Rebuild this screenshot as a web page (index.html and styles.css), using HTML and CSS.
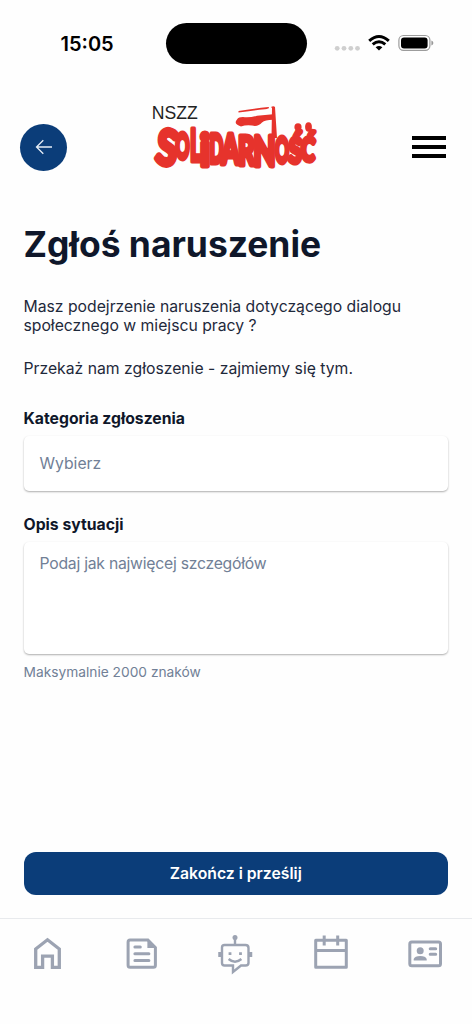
FILE: index.html
```html
<!DOCTYPE html>
<html lang="pl">
<head>
<meta charset="utf-8">
<title>Zgłoś naruszenie</title>
<link rel="stylesheet" href="styles.css">
</head>
<body>
<div class="screen">
  <div class="status">
    <span class="time">15:05</span>
    <span class="island"></span>
    <svg class="indicators" width="100" height="24" viewBox="0 0 100 24">
      <g fill="#cfcfcf"><circle cx="3.200" cy="17.300" r="2.400"/><circle cx="10" cy="17.300" r="2.400"/><circle cx="16.800" cy="17.300" r="2.400"/><circle cx="23.500" cy="17.300" r="2.400"/></g>
      <g fill="none" stroke="#000" stroke-width="3">
        <path d="M35.200 9.800Q45 1.300 54.800 9.800"/>
        <path d="M38.700 13.400Q45 8.100 51.300 13.400"/>
      </g>
      <path d="M41.600 16.300Q45 13.500 48.400 16.300L45 19.600Z"/>
      <rect x="64.900" y="4.500" width="31" height="14.900" rx="4.600" fill="#fff" stroke="#9c9c9c" stroke-width="1.200"/>
      <rect x="67" y="6.500" width="26.600" height="10.900" rx="3"/>
      <path d="M97.400 9.600q2 .7 2 2.400t-2 2.400z" fill="#999"/>
    </svg>
  </div>
  <header class="header">
    <button class="back" aria-label="Wstecz">
      <svg width="18" height="16" viewBox="0 0 18 16" fill="none" stroke="#e6edf6" stroke-width="1.300"><path d="M17 8H1.500M8.300 1.200 1.500 8l6.800 6.800"/></svg>
    </button>
    <svg class="logo" width="170" height="76" viewBox="150 98 170 76">
      <text class="union" x="151.700" y="118.600" textLength="46" lengthAdjust="spacingAndGlyphs">NSZZ</text>
      <text class="brand"><tspan x="154.500" y="162.500" font-size="49" textLength="21" lengthAdjust="spacingAndGlyphs" rotate="10">S</tspan><tspan x="175.500" y="158.500" font-size="36" textLength="14" lengthAdjust="spacingAndGlyphs">O</tspan><tspan x="190" y="161" font-size="43" textLength="11" lengthAdjust="spacingAndGlyphs">L</tspan><tspan x="200" y="166" font-size="43" textLength="10" lengthAdjust="spacingAndGlyphs">i</tspan><tspan x="209.500" y="163" font-size="40" textLength="14" lengthAdjust="spacingAndGlyphs">D</tspan><tspan x="221.500" y="164" font-size="41" textLength="18" lengthAdjust="spacingAndGlyphs">A</tspan><tspan x="238" y="165" font-size="40" textLength="17" lengthAdjust="spacingAndGlyphs">R</tspan><tspan x="253.500" y="166" font-size="41" textLength="22" lengthAdjust="spacingAndGlyphs">N</tspan><tspan x="275" y="163" font-size="36" textLength="14" lengthAdjust="spacingAndGlyphs">O</tspan><tspan x="288.500" y="162.500" font-size="34" textLength="13" lengthAdjust="spacingAndGlyphs" rotate="2">Ś</tspan><tspan x="300.500" y="160" font-size="32" textLength="14" lengthAdjust="spacingAndGlyphs" rotate="4">Ć</tspan></text>
      <g fill="#e6332c">
        <path d="M238.500 111Q252 108.800 268.500 107Q270.500 108.500 265 109.200Q250 110.700 238.500 112.600Z"/>
        <path d="M271 107Q273.500 105.300 275 107L277 138H271.500L272 108Z"/>
        <path d="M237 119.500Q239 116.500 245 117.200Q251 117.500 257 115.800L273 114.300V119.800Q265 120 262 122.500Q258 127 252 125.500Q246 124.700 241 126.500Q233 124 237 119.500Z"/>
        <ellipse cx="298" cy="127" rx="3.600" ry="3.800"/><ellipse cx="308.500" cy="127" rx="3.400" ry="4.700"/>
      </g>
    </svg>
    <button class="menu" aria-label="Menu"><i></i><i></i><i></i></button>
  </header>
  <main class="content">
    <h1>Zgłoś naruszenie</h1>
    <p class="lead">Masz podejrzenie naruszenia dotyczącego dialogu<br>społecznego w miejscu pracy ?</p>
    <p class="note">Przekaż nam zgłoszenie - zajmiemy się tym.</p>
    <div class="label">Kategoria zgłoszenia</div>
    <div class="field select">Wybierz</div>
    <div class="label second">Opis sytuacji</div>
    <div class="field area">Podaj jak najwięcej szczegółów</div>
    <div class="hint">Maksymalnie 2000 znaków</div>
    <button class="submit">Zakończ i prześlij</button>
  </main>
  <nav class="tabs">
    <svg width="40" height="44" viewBox="0 0 40 44" fill="none" stroke="#9ca3b2" stroke-width="3.300"><path d="M8.700 35.300V17L20.500 7.800 32.300 17v18.300h-6.900V24.100h-9.800v11.200z"/></svg>
    <svg width="40" height="44" viewBox="0 0 40 44" fill="none" stroke="#9ca3b2" stroke-width="3"><path d="M8.100 8h17.800L33.400 15.500v17.800q0 2-2 2H8.100q-2 0-2-2V10q0-2 2-2z"/><path d="M25.400 7.500V16h8.500z" fill="#9ca3b2" stroke="none"/><path stroke-linecap="round" d="M12.900 15h5.400M12.900 21.800h14M12.900 28.500h14"/></svg>
    <svg width="40" height="44" viewBox="0 0 40 44" fill="none" stroke="#9ca3b2" stroke-width="2.400"><g transform="translate(-1)"><circle cx="20" cy="5.500" r="2.500" fill="#9ca3b2" stroke="none"/><path d="M20 6v7M9.500 13h21q3 0 3 3v15q0 2.500-3 2.500H26L18 40v-6.500H9.500q-2.500 0-2.500-2.500V15.500Q7 13 9.500 13zM13.600 27q6.400 5.400 12.800 0"/><path d="M5 20v5M35.500 20v5" stroke-width="3.500"/><path d="M15 20.200v2.800M25.500 20.200v2.800" stroke-width="2.800"/></g></svg>
    <svg width="40" height="44" viewBox="0 0 40 44" fill="none" stroke="#9ca3b2" stroke-width="3"><path d="M4.700 8.300h30.600v27H4.700zM4.700 18.500h30.600M13.200 3.500v10M26.700 3.500v10" stroke-linejoin="round"/></svg>
    <svg width="40" height="44" viewBox="0 0 40 44" fill="none" stroke="#9ca3b2" stroke-width="3"><rect x="4.800" y="9.900" width="30.700" height="23.800" rx="2"/><circle cx="15.200" cy="18.700" r="3.500" fill="#9ca3b2" stroke="none"/><path d="M8.700 28.500v-1.500Q9.700 24 15.200 24t6.500 3v1.500z" fill="#9ca3b2" stroke="none"/><path stroke-linecap="round" d="M25.200 16.800h5.500M25.200 22.200h5.500"/></svg>
  </nav>
</div>
</body>
</html>
```
FILE: styles.css
```css
* { box-sizing: border-box; }
body { margin: 0; background: #fff; color: #0f172a; font-family: Inter, sans-serif; }
button { border: 0; padding: 0; font: inherit; }
svg { display: block; }
.screen { width: 472px; height: 1024px; display: flex; flex-direction: column; background: #fefefe; overflow: hidden; }
.status { height: 86px; display: flex; align-items: center; padding: 0 38px 0 60.5px; }
.time { width: 105px; padding-top: 1px; font-size: 20px; font-weight: 600; line-height: 24px; color: #000; }
.island { width: 141px; height: 41px; border-radius: 21px; background: #000; }
.indicators { margin-left: 27.500px; flex: none; }
.header { height: 122px; display: flex; align-items: center; padding: 0 26px 0 20px; }
.back { width: 47px; height: 47px; border-radius: 50%; background: #0b3d79; display: flex; align-items: center; justify-content: center; }
.logo { margin-left: 83px; margin-top: -22px; overflow: visible; }
.union { font-family: "Liberation Sans", sans-serif; font-size: 18px; fill: #222; }
.brand { font-family: Lato, sans-serif; font-weight: 900; fill: #e6332c; stroke: #e6332c; stroke-width: 5px; stroke-linejoin: round; }
.menu { width: 34px; margin-left: auto; display: flex; flex-direction: column; gap: 5.300px; background: none; }
.menu i { height: 4px; background: #000; }
.content { flex: 1; padding: 14px 24px 0 23.500px; display: flex; flex-direction: column; }
h1 { margin: 0; font-size: 35.400px; line-height: 46px; font-weight: 700; }
p { margin: 0; font-size: 15.740px; line-height: 19px; color: #1e293b; }
.lead { margin-top: 29px; }
.note { margin-top: 24px; }
.label { margin-top: 31px; font-size: 15.750px; font-weight: 700; line-height: 20px; }
.field { margin-top: 6.500px; padding: 0 16px; border-radius: 5px; background: #fff; color: #718096; font-size: 15.750px; box-shadow: 0 1px 2px rgba(0,0,0,.32); }
.select { height: 55px; line-height: 55px; }
.second { margin-top: 24.500px; }
.area { height: 112px; padding-top: 12.500px; line-height: 20px; letter-spacing: -.25px; }
.hint { margin-top: 9px; font-size: 13.750px; line-height: 18px; color: #718096; }
.submit { margin-top: auto; margin-bottom: 23.500px; height: 43px; flex: none; border-radius: 12px; background: #0b3d79; color: #fff; font-size: 15.750px; font-weight: 600; }
.tabs { height: 106px; border-top: 1px solid #e8eaed; padding: 13px 27px 0; display: flex; justify-content: space-between; }
```
